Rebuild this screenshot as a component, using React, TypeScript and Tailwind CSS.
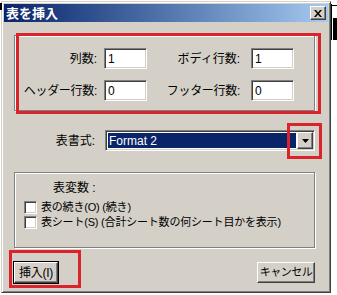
import React from "react";

const font = "font-['Liberation_Sans','Noto_Sans_CJK_JP',sans-serif]";

const sunken =
  "border border-t-[#808080] border-l-[#808080] border-r-white border-b-white shadow-[inset_1px_1px_0_#404040,inset_-1px_-1px_0_#d4d0c8]";
const raised =
  "border border-t-white border-l-white border-r-[#404040] border-b-[#404040] shadow-[inset_-1px_-1px_0_#808080]";
const etched =
  "border border-[#808080] shadow-[inset_1px_1px_0_#fff,1px_1px_0_#fff]";

function NumField({ value }: { value: string }) {
  return (
    <div className={`w-[43px] h-[21px] bg-white ${sunken} flex items-center pl-[3px] text-[12px] text-black`}>
      {value}
    </div>
  );
}

function Check({ label }: { label: string }) {
  return (
    <div className="h-[15px] flex items-center whitespace-nowrap">
      <div className={`w-[13px] h-[13px] bg-white ${sunken} ml-[9px] mr-[4px]`} />
      <span className="text-[11px] leading-none tracking-[-0.2px]">{label}</span>
    </div>
  );
}

function RedBox({ x, y, w, h }: { x: number; y: number; w: number; h: number }) {
  return (
    <div
      className="absolute border-[3px] border-[#d9242b] pointer-events-none"
      style={{ left: x, top: y, width: w, height: h }}
    />
  );
}

export default function App() {
  return (
    <div className={`relative w-[337px] h-[295px] bg-white overflow-hidden ${font} text-black`}>
      {/* Window */}
      <div className="ml-px mt-px w-[330px] h-[292px] bg-[#d4d0c8] border border-t-[#d4d0c8] border-l-[#d4d0c8] border-r-[#404040] border-b-[#404040] shadow-[inset_1px_1px_0_#fff,inset_-1px_-1px_0_#808080] p-[2px] flex flex-col">
        {/* Title bar */}
        <div className="h-[18px] bg-gradient-to-r from-[#0a246a] to-[#a6caf0] flex items-center justify-between pl-[2px] pr-[2px]">
          <span className="text-white font-bold text-[13px] leading-none whitespace-nowrap">表を挿入</span>
          <div className={`w-[16px] h-[14px] bg-[#d4d0c8] ${raised} flex items-center justify-center`}>
            <svg width="8" height="7" viewBox="0 0 8 7">
              <path d="M0 0h2l2 2.5L6 0h2L5 3.5 8 7H6L4 4.5 2 7H0l3-3.5z" fill="#000" />
            </svg>
          </div>
        </div>

        {/* Body */}
        <div className="pl-[10px] flex flex-col">
          {/* Counts */}
          <div className={`mt-[13px] w-[301px] h-[76px] ${etched} pt-[12px] flex flex-col gap-[11px] text-[12px] whitespace-nowrap`}>
            <div className="flex items-center">
              <span className="w-[82px] text-right">列数:</span>
              <div className="ml-[7px]"><NumField value="1" /></div>
              <span className="w-[93px] text-right">ボディ行数:</span>
              <div className="ml-[11px]"><NumField value="1" /></div>
            </div>
            <div className="flex items-center">
              <span className="w-[82px] text-right tracking-[-0.3px]">ヘッダー行数:</span>
              <div className="ml-[7px]"><NumField value="0" /></div>
              <span className="w-[93px] text-right tracking-[-0.3px]">フッター行数:</span>
              <div className="ml-[11px]"><NumField value="0" /></div>
            </div>
          </div>

          {/* Format */}
          <div className="mt-[19px] flex items-center text-[12px]">
            <span className="w-[81px] text-right">表書式:</span>
            <div className={`ml-[10px] w-[210px] h-[21px] bg-white ${sunken} flex items-center pl-[2px] pr-[1px]`}>
              <div className="flex-1 h-[15px] bg-[#0a246a] text-white flex items-center pl-[1px] leading-none">Format 2</div>
              <div className={`ml-[1px] w-[16px] h-[17px] bg-[#d4d0c8] ${raised} flex items-center justify-center`}>
                <svg width="7" height="4" viewBox="0 0 7 4">
                  <path d="M0 0h7L3.5 4z" fill="#000" />
                </svg>
              </div>
            </div>
          </div>

          {/* Variables */}
          <div className={`mt-[21px] w-[301px] h-[76px] ${etched} pt-[9px] flex flex-col`}>
            <span className="ml-[38px] text-[12px] leading-[12px]">表変数 :</span>
            <div className="mt-[6px] flex flex-col">
              <Check label="表の続き(O) (続き)" />
              <Check label="表シート(S) (合計シート数の何シート目かを表示)" />
            </div>
          </div>

          {/* Buttons */}
          <div className="mt-[14px] w-[301px] flex justify-between whitespace-nowrap">
            <button className={`w-[44px] h-[21px] bg-[#d4d0c8] ${raised} outline outline-1 outline-black flex items-center justify-center leading-none text-[12px] tracking-[-0.3px]`}>
              挿入(I)
            </button>
            <button className={`w-[58px] h-[21px] bg-[#d4d0c8] ${raised} flex items-center justify-center leading-none text-[11px] tracking-[-0.5px]`}>
              キャンセル
            </button>
          </div>
        </div>
      </div>

      {/* Background bits outside window */}
      <div className="absolute left-[331px] top-[4px] w-px h-[36px] bg-black" />
      <div className="absolute left-[331px] top-[5px] w-[6px] h-px bg-black" />
      <div className="absolute left-[333px] top-[18px] w-[4px] h-[22px] bg-black" />
      <div className="absolute left-0 top-[3px] w-[2px] h-[7px] bg-black" />

      {/* Annotations */}
      <RedBox x={16} y={33} w={305} h={81} />
      <RedBox x={287} y={123} w={35} h={36} />
      <RedBox x={9} y={250} w={72} h={38} />
    </div>
  );
}
